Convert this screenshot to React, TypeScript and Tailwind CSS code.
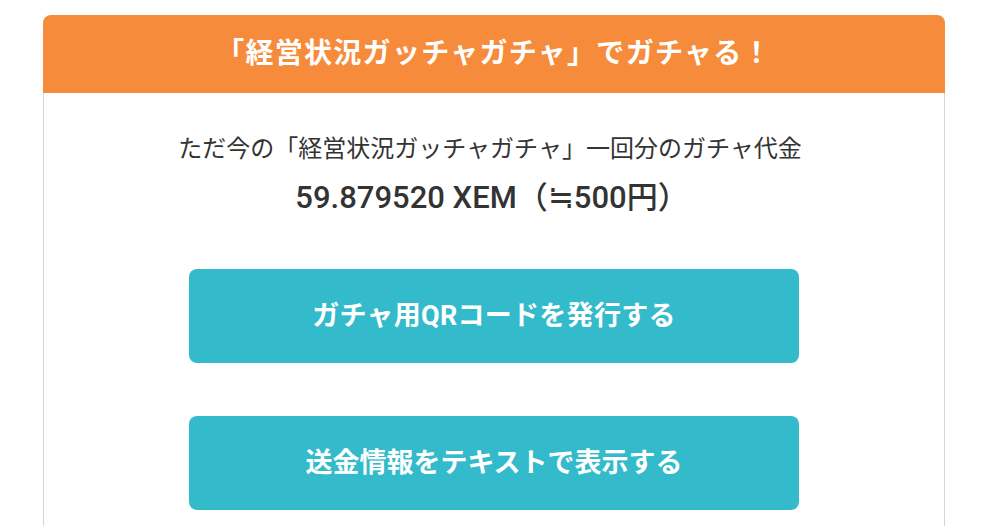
import React from 'react';

const font = { fontFamily: '"Roboto", "Noto Sans CJK JP", sans-serif' };

export default function App() {
  return (
    <div className="min-h-screen bg-white" style={font}>
      <div className="mx-[43px] pt-[15px] w-[902px]">
        {/* Card header */}
        <div className="h-[78px] bg-[#f68b3c] rounded-t-lg flex items-center justify-center">
          <h2 className="text-[28px] font-bold text-white tracking-[0.046em]">「経営状況ガッチャガチャ」でガチャる！</h2>
        </div>

        {/* Card body */}
        <div className="border-x border-[#d4d4d4] h-[433px] flex flex-col items-center pt-[38px]">
          <p className="text-[24px] text-[#333] leading-[36px] pr-2">ただ今の「経営状況ガッチャガチャ」一回分のガチャ代金</p>
          <p className="text-[31px] font-medium text-[#333] leading-[44px] mt-[9px] pr-1">59.879520 XEM（≒500円）</p>

          <button className="mt-[49px] w-[610px] h-[94px] rounded-lg bg-[#33bacb] text-white text-[27px] font-bold tracking-[0.01em]">
            ガチャ用QRコードを発行する
          </button>
          <button className="mt-[53px] w-[610px] h-[94px] rounded-lg bg-[#33bacb] text-white text-[27px] font-bold">
            送金情報をテキストで表示する
          </button>
        </div>
      </div>
    </div>
  );
}
